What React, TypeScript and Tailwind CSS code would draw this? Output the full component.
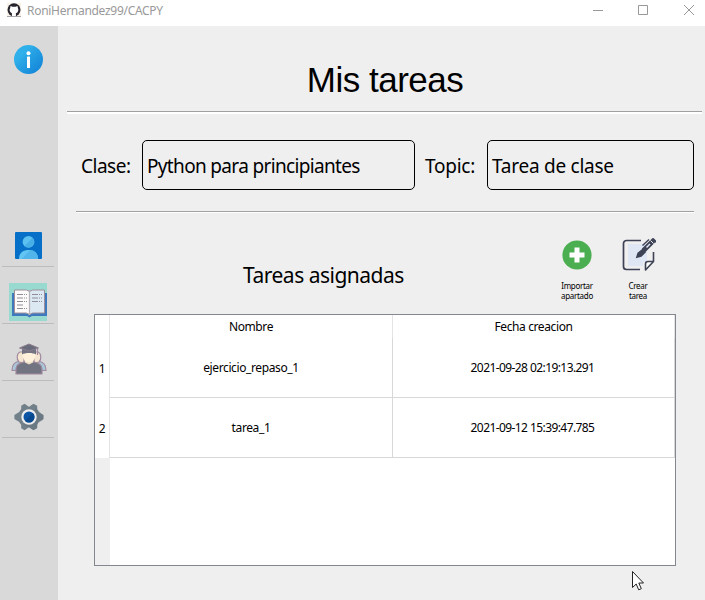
import type { ReactNode } from "react";

const UI = "font-['Noto_Sans','Open_Sans',sans-serif]";

function InfoIcon() {
  return (
    <svg width="30" height="30" viewBox="0 0 30 30">
      <defs>
        <linearGradient id="info" x1="0" y1="0" x2="1" y2="1">
          <stop offset="0.3" stopColor="#2fb0ea" />
          <stop offset="0.45" stopColor="#27a2e4" />
          <stop offset="0.8" stopColor="#188cdb" />
        </linearGradient>
      </defs>
      <circle cx="14.500" cy="14.500" r="14.500" fill="url(#info)" />
      <circle cx="14.500" cy="8.300" r="2" fill="#fff" />
      <rect x="13" y="11.500" width="3" height="11.500" rx="0.6" fill="#fff" />
    </svg>
  );
}

function PersonIcon() {
  return (
    <svg width="27" height="27" viewBox="0 0 27 27">
      <rect width="27" height="27" rx="1" fill="#0670c8" />
      <path d="M4 27c0-6 4-9 9.500-9s9.500 3 9.500 9z" fill="#61c4f3" />
      <path d="M7 27l8-9c5 .4 8 3.500 8 9z" fill="#50b5ea" />
      <circle cx="13.500" cy="9.800" r="5.900" fill="#5cc0f1" />
      <path d="M9.400 14l8.300-8.300a5.900 5.900 0 0 1-8.300 8.300z" fill="#48aee6" />
    </svg>
  );
}

function BookIcon() {
  return (
    <svg width="38" height="38" viewBox="0 0 38 38">
      <path d="M3 10h2v20h11l4 1.500 4-1.500h12V10h2v23H23l-2.500 1.500L18 33H3z" fill="#3e78bd" />
      <path d="M5.500 7h12l3 1.500v23l-3-1.500h-12z" fill="#fdfbfa" stroke="#a08f9a" strokeWidth="1" />
      <path d="M20.500 8.500l3-1.500h12v23h-12l-3 1.500z" fill="#dce9f2" stroke="#a08f9a" strokeWidth="1" />
      <path d="M20.500 7v25" stroke="#b5b2ba" strokeWidth="1.300" />
      <path d="M8 11.500h6M8 15h6M8 18.500h6M8 22h6M8 25.500h6M23 11.500h6M23 15h6M23 18.500h6" stroke="#8e8d98" strokeWidth="1" />
      <path d="M15 11.500h3M15 15h3M15 18.500h3M15 25.500h3M30 11.500h3M30 15h3M30 18.500h3" stroke="#8e8d98" strokeWidth="1" strokeDasharray="1 1" />
    </svg>
  );
}

function StudentsIcon() {
  return (
    <svg width="36" height="32" viewBox="0 0 36 32">
      <g stroke="#a18a9f" strokeWidth="1.200" strokeLinejoin="round">
        <path d="M1 27.500c0-6 3-9 8-9h3v9z" fill="#a9c7d9" />
        <path d="M35 27.500c0-6-3-9-8-9h-3v9z" fill="#a9c7d9" />
        <path d="M9 9c-3 1-4 7-1 10l5 1V9z" fill="#f4e6d0" />
        <path d="M27 9c3 1 4 7 1 10l-5 1V9z" fill="#f4e6d0" />
        <path d="M5 31v-5c0-4 3-6 8-7h10c5 1 8 3 8 7v5z" fill="#737482" />
      </g>
      <path d="M14 17v2.500l4 2 4-2V17z" fill="#f0dfc7" />
      <path d="M11.500 9v3c0 4 3 7.500 6.500 7.500s6.500-3.500 6.500-7.500V9z" fill="#fff2dc" />
      <path d="M11 6v5.500c3-2 11-2 14 0V6z" fill="#737482" />
      <path d="M8.500 5L18 1l9.500 4L18 8z" fill="#686b7a" stroke="#8b7c8e" strokeWidth="1" />
      <path d="M26.500 6v6" stroke="#a18a9f" strokeWidth="1.200" />
    </svg>
  );
}

function GearIcon() {
  return (
    <svg width="30" height="28" viewBox="0 0 30 28">
      <g fill="#72808a">
        <circle cx="15" cy="14" r="11" />
        <path d="M10.500.8L14 3h2l3.500-2.200 3.700 2v4.500h-16V2.800z" />
        <path d="M10.500 27.200L14 25h2l3.500 2.200 3.700-2v-4.500h-16v4.500z" />
        <path d="M.4 12v4l4 2.500h21L29.600 16v-4l-4.200-2.500h-21z" />
      </g>
      <path d="M12.700 0h4.600L16 3.400h-2zM12.700 28h4.600L16 24.600h-2z" fill="#d9d9d9" />
      <path d="M22 5l3 3 4 5v4l-5 3-1.500 5-3 2-4-2L10 22z" fill="#626e77" opacity=".4" />
      <circle cx="15" cy="14" r="7.700" fill="#eeeeee" />
      <circle cx="15" cy="14" r="5.500" fill="#0b55a4" />
      <path d="M11.100 17.900l7.800-7.800a5.500 5.500 0 0 1-7.800 7.800z" fill="#08488f" />
    </svg>
  );
}

function AddIcon() {
  return (
    <svg width="30" height="30" viewBox="0 0 30 30">
      <circle cx="15" cy="15" r="14.600" fill="#4bae50" />
      <path d="M12.500 7.500h5v5h5v5h-5v5h-5v-5h-5v-5h5z" fill="#fff" />
    </svg>
  );
}

function NoteIcon() {
  return (
    <svg width="34" height="34" viewBox="0 0 34 34">
      <path d="M6 6h19v18h-4v4H6z" fill="#dfe7f5" />
      <path d="M19 2.500H4.500A3 3 0 0 0 1.500 5.500v23a3 3 0 0 0 3 3H18" fill="none" stroke="#3d4255" strokeWidth="1.700" />
      <path d="M31.500 14v9.500l-8 8.500v-6q0-2.500 2.500-2.500h5" fill="#fff" stroke="#3d4255" strokeWidth="1.600" strokeLinejoin="round" />
      <path d="M13.700 20.300l1.800-5.500 5-4 3.500 3.500-4.500 4.500z" fill="#3d4255" />
      <path d="M21.500 12.500L31.500 2.500" stroke="#3d4255" strokeWidth="5" />
      <path d="M31 1l2.500 2.500" stroke="#3d4255" strokeWidth="2" strokeLinecap="round" />
      <path d="M24.500 9.500L28 6" stroke="#e4e9f2" strokeWidth="1.500" />
      <path d="M28.500 2.500l3 3" stroke="#efefef" strokeWidth="1" />
      <path d="M20.500 7.500L27 1.500" stroke="#3d4255" strokeWidth="1.400" />
    </svg>
  );
}

function GithubIcon() {
  return (
    <svg width="14" height="14" viewBox="0 0 14 14">
      <path d="M0 0h14v14H0z" fill="#f8f1e7" />
      <circle cx="7" cy="6.800" r="6.500" fill="#26232d" />
      <path d="M3.500 3l2 .8h3l2-.8.4 2c1 1.800.4 4.600-2 5.200V14h-4v-3.800C2.600 9.500 2 6.800 3.200 5z" fill="#fff" />
      <path d="M0 13.500h14" stroke="#a7a5aa" />
    </svg>
  );
}

function NavItem({ children }: { children: ReactNode }) {
  return (
    <div className="flex h-[57px] w-[52px] items-end justify-center border-b border-[#bcbcbc]">
      {children}
    </div>
  );
}

function Etched({ className }: { className: string }) {
  return <div className={`border-t border-[#a0a0a0] bg-white ${className}`} />;
}

const rows = [
  { id: 1, name: "ejercicio_repaso_1", date: "2021-09-28 02:19:13.291" },
  { id: 2, name: "tarea_1", date: "2021-09-12 15:39:47.785" },
];

export default function App() {
  return (
    <div className={`${UI} relative flex h-[600px] w-[705px] flex-col overflow-hidden bg-[#efefef] text-black`}>
      <header className="flex h-[26px] shrink-0 items-start bg-white pl-[7px]">
        <div className="pt-[3px]"><GithubIcon /></div>
        <span className="ml-[6px] mt-[2px] whitespace-nowrap text-[12px] leading-[18px] tracking-[-0.29px] text-[#999]">
          RoniHernandez99/CACPY
        </span>
        <svg className="ml-auto mr-[10px] mt-[4px]" width="103" height="12" viewBox="0 0 103 12" fill="none" stroke="#999999">
          <path d="M1 6.500h10M46.500 1.500h9v9h-9zM92 1l10 10M102 1L92 11" />
        </svg>
      </header>
      <div className="flex min-h-0 flex-1">
        <nav className="flex w-[58px] shrink-0 flex-col bg-[#d9d9d9] pl-[2px]">
          <div className="flex h-[184px] w-[52px] justify-center pl-[2px] pt-[19px]"><InfoIcon /></div>
          <NavItem><div className="mb-[7px]"><PersonIcon /></div></NavItem>
          <NavItem><div className="mb-[2px] bg-[#98dad0]"><BookIcon /></div></NavItem>
          <NavItem><div className="mb-[5px] pl-[1px]"><StudentsIcon /></div></NavItem>
          <NavItem><div className="mb-[6px] pl-[1px]"><GearIcon /></div></NavItem>
        </nav>
        <main className="flex flex-1 flex-col">
          <h1 className="mt-[34px] h-[51px] pl-[7px] text-center font-['Liberation_Sans',Arial,sans-serif] text-[35px] leading-[40px] tracking-[-0.5px]">
            Mis tareas
          </h1>
          <Etched className="ml-[9px] mr-[3px] h-[3px]" />
          <div className="mt-[26px] flex h-[50px] items-center pl-[23px] pr-[11px] text-[19px] tracking-[-0.25px]">
            <span className="w-[61px] whitespace-nowrap pt-[2px] tracking-[-0.5px]">Clase:</span>
            <div className="flex h-[50px] w-[273px] items-center whitespace-nowrap rounded-[5px] border border-black pl-[4px] pt-[2px] tracking-[-0.66px]">
              Python para principiantes
            </div>
            <span className="w-[72px] whitespace-nowrap pl-[10px] pt-[2px]">Topic:</span>
            <div className="flex h-[50px] flex-1 items-center whitespace-nowrap rounded-[5px] border border-black pl-[4px] pt-[2px]">
              Tarea de clase
            </div>
          </div>
          <Etched className="ml-[18px] mr-[11px] mt-[21px] h-[2px]" />
          <div className="flex h-[101px] items-start">
            <h2 className="ml-[185px] mt-[48px] w-[289px] whitespace-nowrap text-[21px] leading-[28px] tracking-[-0.5px]">
              Tareas asignadas
            </h2>
            <div className="mt-[27px] flex w-[90px] flex-col items-center text-center text-[8px] leading-[10px] tracking-[-0.3px]">
              <AddIcon />
              <span className="mt-[11px]">Importar<br />apartado</span>
            </div>
            <div className="mt-[25px] flex w-[34px] flex-col items-center text-center text-[8px] leading-[10px] tracking-[-0.3px]">
              <NoteIcon />
              <span className="mt-[9px] pr-[2px]">Crear<br />tarea</span>
            </div>
          </div>
          <div className="ml-[36px] flex h-[252px] w-[582px] flex-col border border-[#828790] bg-white text-[12px] tracking-[-0.38px]">
            <div className="flex h-[23px] shrink-0">
              <div className="w-[15px] border-r border-[#e4e4e4]" />
              <div className="flex w-[283px] items-center justify-center border-r border-[#e4e4e4]">Nombre</div>
              <div className="flex w-[282px] items-center justify-center border-r border-[#e4e4e4]">Fecha creacion</div>
            </div>
            {rows.map((row) => (
              <div key={row.id} className="flex h-[60px] shrink-0">
                <div className="flex w-[15px] items-center justify-center border-r border-[#e4e4e4] pt-[2px]">{row.id}</div>
                <div className="flex w-[283px] items-center justify-center border-r border-b border-[#d8d8d8]">{row.name}</div>
                <div className="flex w-[282px] items-center justify-center border-r border-b border-[#d8d8d8] pr-[2px] tracking-[-0.58px]">{row.date}</div>
              </div>
            ))}
            <div className="w-[15px] flex-1 bg-[#efefef]" />
          </div>
        </main>
      </div>
      <svg className="absolute left-[632px] top-[571px]" width="12" height="20" viewBox="0 0 12 20">
        <path d="M.5.500v16l3.700-3.500 2.500 5.800 2.600-1.100-2.500-5.700H11.500z" fill="#fff" stroke="#222" />
      </svg>
    </div>
  );
}
